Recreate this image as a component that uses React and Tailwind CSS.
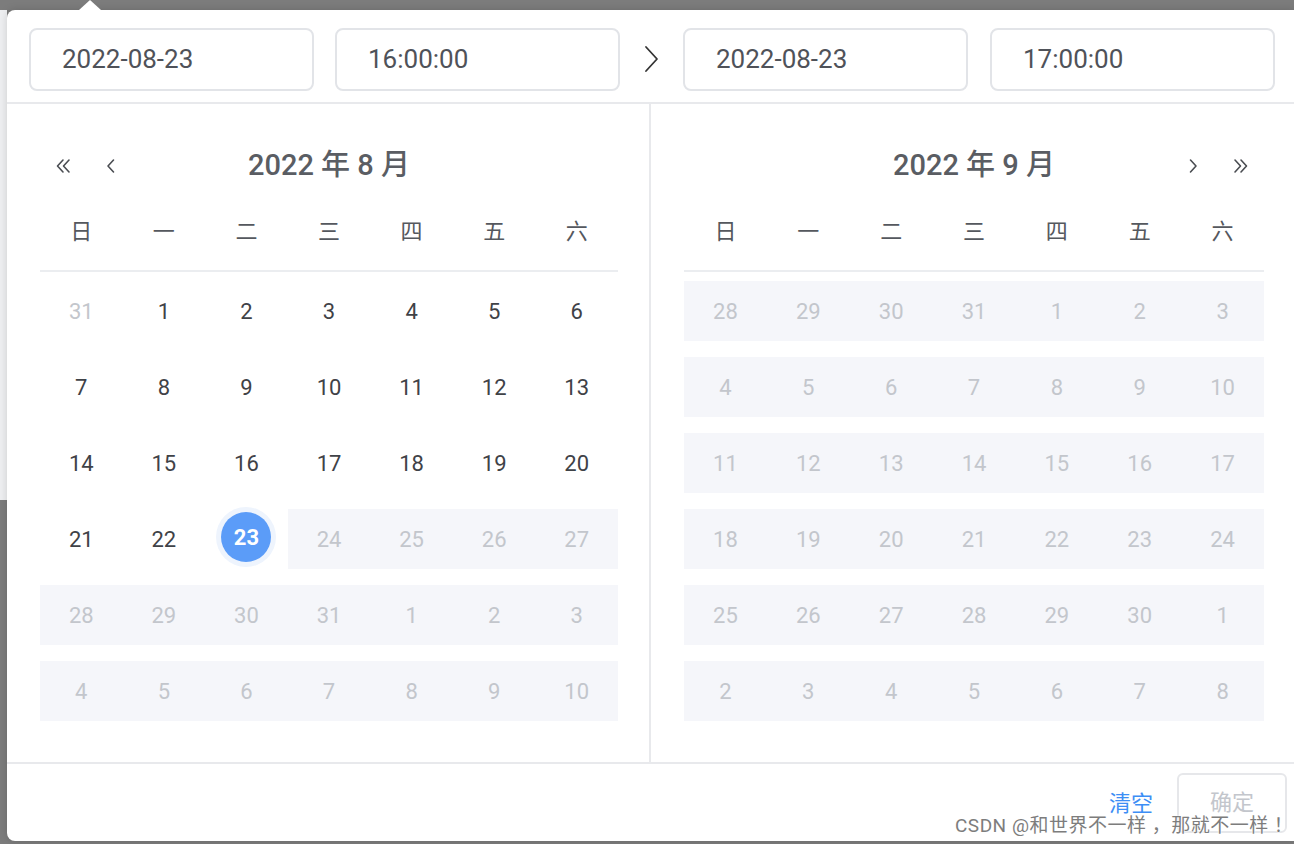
import React from 'react';

const font = { fontFamily: 'Roboto, "Noto Sans CJK SC", sans-serif' };

const weekdays = ['日', '一', '二', '三', '四', '五', '六'];

// each cell: [label, kind] kind: 'n' normal, 'o' other month, 'r' in range (disabled look), 's' selected
const augRows = [
  [['31', 'o'], ['1', 'n'], ['2', 'n'], ['3', 'n'], ['4', 'n'], ['5', 'n'], ['6', 'n']],
  [['7', 'n'], ['8', 'n'], ['9', 'n'], ['10', 'n'], ['11', 'n'], ['12', 'n'], ['13', 'n']],
  [['14', 'n'], ['15', 'n'], ['16', 'n'], ['17', 'n'], ['18', 'n'], ['19', 'n'], ['20', 'n']],
  [['21', 'n'], ['22', 'n'], ['23', 's'], ['24', 'r'], ['25', 'r'], ['26', 'r'], ['27', 'r']],
  [['28', 'r'], ['29', 'r'], ['30', 'r'], ['31', 'r'], ['1', 'r'], ['2', 'r'], ['3', 'r']],
  [['4', 'r'], ['5', 'r'], ['6', 'r'], ['7', 'r'], ['8', 'r'], ['9', 'r'], ['10', 'r']],
];

const sepRows = [
  ['28', '29', '30', '31', '1', '2', '3'],
  ['4', '5', '6', '7', '8', '9', '10'],
  ['11', '12', '13', '14', '15', '16', '17'],
  ['18', '19', '20', '21', '22', '23', '24'],
  ['25', '26', '27', '28', '29', '30', '1'],
  ['2', '3', '4', '5', '6', '7', '8'],
].map(r => r.map(d => [d, 'r']));

const Chevron = ({ dir = 'left', double = false }) => (
  <svg width="20" height="20" viewBox="0 0 20 20" fill="none" stroke="#4a4d52" strokeWidth="1.6" strokeLinecap="round" strokeLinejoin="round">
    {dir === 'left' ? (
      double ? (
        <>
          <path d="M9 4 L3.5 10 L9 16" />
          <path d="M15 4 L9.5 10 L15 16" />
        </>
      ) : (
        <path d="M12.5 4 L7 10 L12.5 16" />
      )
    ) : double ? (
      <>
        <path d="M5 4 L10.5 10 L5 16" />
        <path d="M11 4 L16.5 10 L11 16" />
      </>
    ) : (
      <path d="M7.5 4 L13 10 L7.5 16" />
    )}
  </svg>
);

const Cell = ({ label, kind }) => {
  if (kind === 's') {
    return (
      <div className="flex items-center justify-center h-[60px]">
        <div className="w-[60px] h-[60px] rounded-full bg-[#eef4fd] flex items-center justify-center -mt-[4px]">
          <div className="w-[50px] h-[50px] rounded-full bg-[#5b9cf8] flex items-center justify-center text-white font-bold text-[22px]">
            {label}
          </div>
        </div>
      </div>
    );
  }
  const cls =
    kind === 'r'
      ? 'bg-[#f5f6fa] text-[#c3c6cc]'
      : kind === 'o'
      ? 'text-[#c3c6cc]'
      : 'text-[#3f4247]';
  return <div className={`h-[60px] flex items-center justify-center text-[22px] ${cls}`}>{label}</div>;
};

const Month = ({ title, rows, left }) => (
  <div className="flex-1 flex flex-col pt-[38px] pb-[41px] pl-[33px] pr-[31px]">
    <div className="relative h-[48px] flex items-center justify-center text-[29px] text-[#5a5d63] font-medium">
      {left ? (
        <div className="absolute left-[14px] top-[14px] flex gap-[27px]">
          <Chevron dir="left" double />
          <Chevron dir="left" />
        </div>
      ) : (
        <div className="absolute right-[14px] top-[14px] flex gap-[27px]">
          <Chevron dir="right" />
          <Chevron dir="right" double />
        </div>
      )}
      <span>{title}</span>
    </div>
    <div className="grid grid-cols-7 mt-[23px] h-[40px] items-center text-[22px] text-[#55585e]">
      {weekdays.map(w => (
        <div key={w} className="text-center">{w}</div>
      ))}
    </div>
    <div className="mt-[19px] border-t-2 border-[#ebedf0]" />
    <div className="mt-[9px] flex flex-col gap-[16px]">
      {rows.map((r, i) => (
        <div key={i} className="grid grid-cols-7">
          {r.map(([label, kind], j) => (
            <Cell key={j} label={label} kind={kind} />
          ))}
        </div>
      ))}
    </div>
  </div>
);

const Field = ({ value }) => (
  <div className="w-[285px] h-[63px] shrink-0 border-2 border-[#e2e4e8] rounded-[8px] flex items-center pl-[31px] text-[26px] text-[#4f5259]">
    {value}
  </div>
);

export default function App() {
  return (
    <div className="w-[1294px] h-[844px] bg-[#7c7c7c] overflow-hidden relative" style={font}>
      <div className="flex pt-[10px] h-full">
        <div className="w-[7px] shrink-0 flex flex-col">
          <div className="h-[490px] bg-[#eeeff1]" />
        </div>
        <div className="relative w-[1288px] h-[831px] shrink-0 bg-white rounded-l-[8px] flex flex-col shadow-[0_0_8px_rgba(0,0,0,0.15)]">
          {/* arrow */}
          <div className="absolute -top-[10px] left-[72px] w-0 h-0 border-l-[11px] border-r-[11px] border-b-[10px] border-l-transparent border-r-transparent border-b-white" />

          {/* header */}
          <div className="h-[94px] border-b-2 border-[#e8e9ec] flex items-start pt-[18px] pl-[22px]">
            <Field value="2022-08-23" />
            <div className="w-[21px] shrink-0" />
            <Field value="16:00:00" />
            <div className="w-[63px] h-[62px] shrink-0 flex items-center justify-center">
              <svg width="20" height="30" viewBox="0 0 20 30" fill="none" stroke="#333" strokeWidth="1.8" strokeLinecap="round" strokeLinejoin="round">
                <path d="M4 3 L15 15 L4 27" />
              </svg>
            </div>
            <Field value="2022-08-23" />
            <div className="w-[22px] shrink-0" />
            <Field value="17:00:00" />
          </div>

          {/* body */}
          <div className="flex h-[660px] border-b-2 border-[#e8e9ec]">
            <div className="w-[644px] border-r-2 border-[#e8e9ec] flex">
              <Month title="2022 年 8 月" rows={augRows} left />
            </div>
            <div className="flex-1 flex">
              <Month title="2022 年 9 月" rows={sepRows} />
            </div>
          </div>

          {/* footer */}
          <div className="flex-1 flex items-center justify-end pr-[8px] gap-[24px]">
            <span className="text-[22px] text-[#3d8ef5] mt-[2px]">清空</span>
            <div className="w-[110px] h-[60px] border-2 border-[#e6e7ea] rounded-[6px] flex items-center justify-center text-[22px] text-[#c3c6cc]">
              确定
            </div>
          </div>
        </div>
      </div>

      {/* watermark overlay */}
      <div
        className="absolute left-[955px] top-[812px] text-[19px] text-[#7d7d7d] whitespace-nowrap tracking-[0.5px]"
        style={{ ...font, textShadow: '0 0 2px #fff, 0 0 2px #fff' }}
      >
        CSDN @和世界不一样 ，那就不一样 ！
      </div>
    </div>
  );
}
